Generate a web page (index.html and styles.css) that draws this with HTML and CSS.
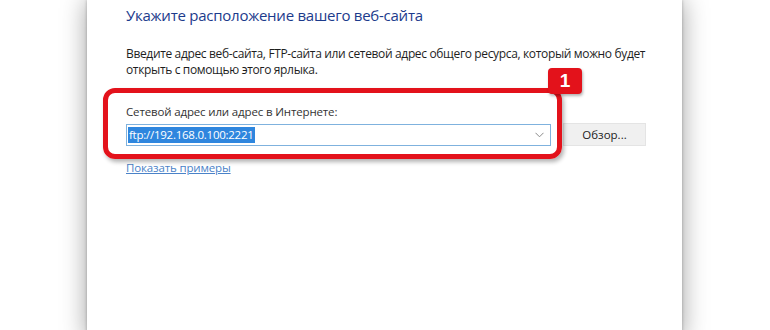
FILE: index.html
```html
<!DOCTYPE html>
<html lang="ru">
<head>
<meta charset="utf-8">
<title>Ярлык</title>
<link rel="stylesheet" href="styles.css">
</head>
<body>
<div class="page">
  <div class="dialog">
    <h1 class="title">Укажите расположение вашего веб-сайта</h1>
    <p class="desc"><span class="line">Введите адрес веб-сайта, FTP-сайта или сетевой адрес общего ресурса, который можно будет</span><span class="line">открыть с помощью этого ярлыка.</span></p>
    <div class="field">
      <label class="label">Сетевой адрес или адрес в Интернете:</label>
      <div class="row">
        <div class="combo">
          <span class="sel">ftp://192.168.0.100:2221</span>
          <svg class="chev" width="9" height="6" viewBox="0 0 9 6"><path d="M0.5 0.8 L4.5 4.8 L8.5 0.8" fill="none" stroke="#8a8a8a" stroke-width="1"/></svg>
        </div>
        <button class="browse">Обзор...</button>
      </div>
    </div>
    <a class="link" href="#">Показать примеры</a>
    <div class="highlight"></div>
    <div class="badge">1</div>
  </div>
</div>
</body>
</html>
```
FILE: styles.css
```css
html, body {
  margin: 0;
  padding: 0;
  background: #ffffff;
  height: 330px;
  overflow: hidden;
}
.page {
  display: flex;
  padding-left: 87px;
  font-family: "Open Sans", "Noto Sans", sans-serif;
}
.dialog {
  position: relative;
  width: 595px;
  height: 340px;
  background: #fff;
  box-shadow: 0 0 24px rgba(0,0,0,0.38), 0 0 3px rgba(0,0,0,0.25);
  padding: 5px 0 0 39px;
  box-sizing: border-box;
}
.title {
  margin: 0;
  font-weight: 400;
  font-size: 15px;
  line-height: 20px;
  color: #1c3b8c;
  letter-spacing: -0.25px;
}
.desc {
  margin: 21px 0 0;
  font-size: 12px;
  line-height: 16px;
  color: #1e1e1e;
  letter-spacing: -0.35px;
}
.line {
  display: block;
  width: max-content;
}
.field {
  margin-top: 26px;
  display: flex;
  flex-direction: column;
  gap: 3px;
}
.label {
  font-size: 11.5px;
  line-height: 16px;
  color: #333;
  letter-spacing: -0.15px;
}
.row {
  display: flex;
  align-items: center;
  gap: 12px;
}
.combo {
  width: 425px;
  height: 22px;
  box-sizing: border-box;
  border: 1px solid #7fb2de;
  display: flex;
  align-items: center;
  justify-content: space-between;
  padding: 0 6px 0 1px;
}
.sel {
  background: #2e86de;
  color: #fff;
  font-size: 11.5px;
  line-height: 16px;
  letter-spacing: -0.25px;
  padding: 0 1px;
}
.chev {
  display: block;
}
.browse {
  width: 83px;
  height: 23px;
  border: 1px solid #e4e4e4;
  background: #f0f0f0;
  font-family: inherit;
  font-size: 11.5px;
  color: #222;
  padding: 0;
}
.link {
  display: block;
  margin-top: 14px;
  font-size: 11.5px;
  line-height: 16px;
  color: #4a82c8;
  text-decoration: underline;
  width: max-content;
  letter-spacing: -0.15px;
}
.highlight {
  position: absolute;
  left: 16px;
  top: 88px;
  width: 459px;
  height: 71px;
  box-sizing: border-box;
  border: 5px solid #e3121b;
  border-radius: 12px;
  box-shadow: 2px 3px 4px rgba(0,0,0,0.3);
}
.badge {
  position: absolute;
  left: 461px;
  top: 68px;
  width: 34px;
  height: 26px;
  background: #e3121b;
  border-radius: 4px;
  color: #fff;
  font-family: "Liberation Sans", sans-serif;
  font-weight: 700;
  font-size: 19px;
  line-height: 26px;
  text-align: center;
  box-shadow: 1px 2px 3px rgba(0,0,0,0.3);
}
```
